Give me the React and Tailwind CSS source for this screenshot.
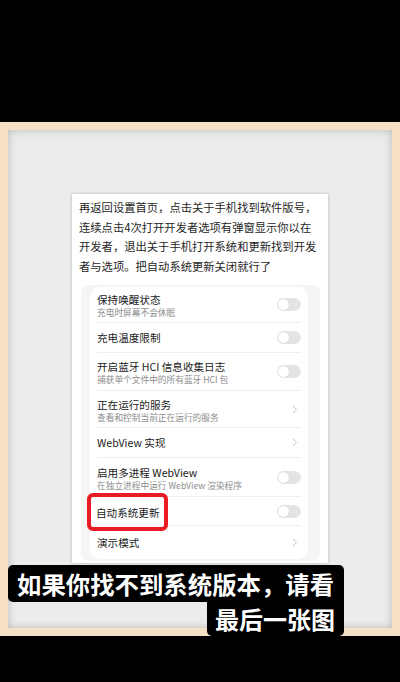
import React from 'react'

const CJK = { fontFamily: '"Noto Sans CJK SC", "Noto Sans", sans-serif' }

const ROWS = [
  { title: '保持唤醒状态', sub: '充电时屏幕不会休眠', kind: 'toggle', h: 'h-[36px]' },
  { title: '充电温度限制', kind: 'toggle', h: 'h-[30px]' },
  { title: '开启蓝牙 HCI 信息收集日志', sub: '捕获单个文件中的所有蓝牙 HCI 包', kind: 'toggle', h: 'h-[38px]' },
  { title: '正在运行的服务', sub: '查看和控制当前正在运行的服务', kind: 'chevron', h: 'h-[37px]' },
  { title: 'WebView 实现', kind: 'chevron', h: 'h-[30px]' },
  { title: '启用多进程 WebView', sub: '在独立进程中运行 WebView 渲染程序', kind: 'toggle', h: 'h-[39px]' },
  { title: '自动系统更新', kind: 'toggle', h: 'h-[29px]', marked: true },
  { title: '演示模式', kind: 'chevron', h: 'h-[33px]', last: true },
]

function Toggle() {
  return (
    <div className="w-[24px] h-[13px] rounded-full bg-[#e4e4e4] flex items-center px-[1px]">
      <div className="w-[11px] h-[11px] rounded-full bg-white shadow-[0_0_1px_rgba(0,0,0,0.15)]" />
    </div>
  )
}

function Chevron() {
  return (
    <svg width="6" height="9" viewBox="0 0 6 9" className="mr-[3px]">
      <path d="M1 1l3.5 3.5L1 8" fill="none" stroke="#c4c4c4" strokeWidth="1" />
    </svg>
  )
}

function Row({ title, sub, kind, h, marked, last }) {
  return (
    <div className={`relative ${h} mx-[7px] flex items-center justify-between ${last ? '' : 'border-b border-[#efefef]'}`}>
      <div className={`flex flex-col ${sub ? 'pt-[2px]' : ''}`}>
        <span className={`text-[10.6px] leading-[15px] text-[#1a1a1a] whitespace-nowrap ${marked ? 'invisible' : ''}`}>{title}</span>
        {sub && <span className="text-[8.7px] leading-[12px] text-[#8c8c8c] whitespace-nowrap">{sub}</span>}
      </div>
      {kind === 'toggle' ? <Toggle /> : <Chevron />}
      {marked && (
        <div className="absolute left-[-10px] top-[-4px] w-[81px] h-[38px] border-[4px] border-[#ea1b22] rounded-[6px] bg-white flex items-center pl-[5px]">
          <span className="text-[10.6px] leading-[15px] text-[#1a1a1a] whitespace-nowrap">{title}</span>
        </div>
      )}
    </div>
  )
}

export default function App() {
  return (
    <div className="relative w-[400px] h-[682px] bg-black flex flex-col overflow-hidden" style={CJK}>
      <div className="h-[122px] shrink-0" />
      <div className="h-[514px] shrink-0 bg-[#f6e0c3] p-[8px]">
        <div className="h-full bg-[#ececec] shadow-[inset_0_0_9px_rgba(0,0,0,0.22)] pt-[64px] pl-[64px]">
          <div className="w-[256px] h-[369px] bg-white shadow-[0_0_3px_rgba(0,0,0,0.25)] pt-[4px]">
            <div className="pl-[7px] text-[11.3px] leading-[19.5px] text-[#262626]">
              <div className="whitespace-nowrap">再返回设置首页，点击关于手机找到软件版号，</div>
              <div className="whitespace-nowrap">连续点击4次打开开发者选项有弹窗显示你以在</div>
              <div className="whitespace-nowrap">开发者，退出关于手机打开系统和更新找到开发</div>
              <div className="whitespace-nowrap">者与选项。把自动系统更新关闭就行了</div>
            </div>
            <div className="mt-[9px] ml-[9px] w-[239px] h-[276px] rounded-[8px] bg-[#f5f5f5] pt-[2px] pl-[9px]">
              <div className="w-[218px] rounded-[10px] bg-white">
                {ROWS.map((r) => (
                  <Row key={r.title} {...r} />
                ))}
              </div>
            </div>
          </div>
        </div>
      </div>
      <div className="flex-1" />

      <div className="absolute left-[8px] top-[565px] w-[336px] flex flex-col items-end">
        <div className="w-full h-[37px] bg-black rounded-[5px] rounded-br-none flex items-center pl-[9px]">
          <span className="text-[24.4px] leading-[30px] font-bold text-white whitespace-nowrap">如果你找不到系统版本，请看</span>
        </div>
        <div className="w-[137px] h-[35px] -mt-[1px] bg-black rounded-b-[5px] flex items-center justify-end pr-[9px]">
          <span className="text-[24px] leading-[30px] font-bold text-white whitespace-nowrap">最后一张图</span>
        </div>
      </div>
    </div>
  )
}
